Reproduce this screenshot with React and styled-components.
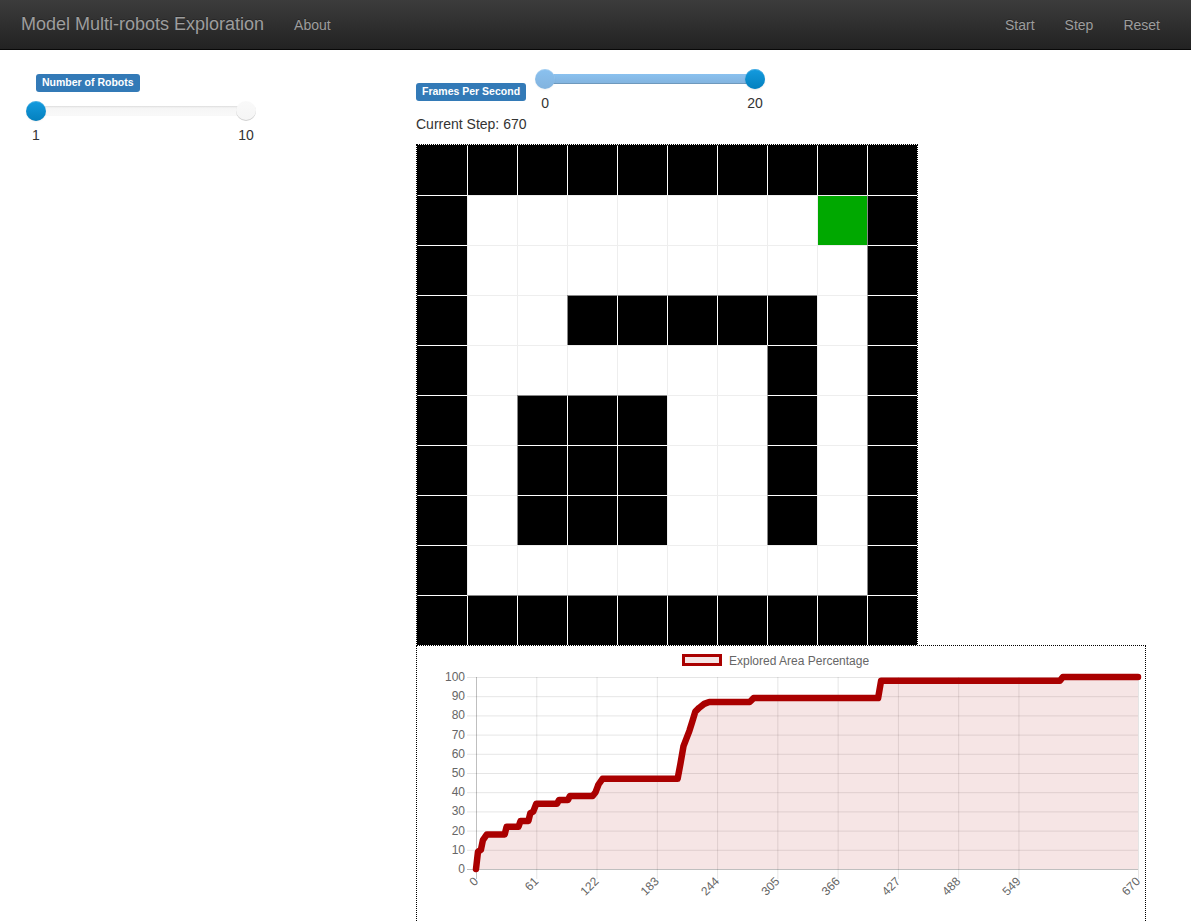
import React from 'react';
import styled, { createGlobalStyle } from 'styled-components';

const GlobalStyle = createGlobalStyle`
  body {
    margin: 0;
    font-family: "Liberation Sans", Arial, Helvetica, sans-serif;
    font-size: 14px;
    color: #333;
    background: #fff;
  }
`;

const Navbar = styled.nav`
  height: 50px;
  box-sizing: border-box;
  display: flex;
  align-items: center;
  background: linear-gradient(to bottom, #3c3c3c 0%, #222 100%);
  border-bottom: 1px solid #080808;
`;

const Brand = styled.a`
  padding: 0 15px 0 21px;
  font-size: 18px;
  color: #9d9d9d;
  text-shadow: 0 -1px 0 rgba(0, 0, 0, 0.25);
`;

const NavLink = styled.a`
  padding: 0 15px;
  font-size: 14px;
  color: #9d9d9d;
  text-shadow: 0 -1px 0 rgba(0, 0, 0, 0.25);
`;

const NavRight = styled.div`
  margin-left: auto;
  padding-right: 16px;
  display: flex;
`;

const Main = styled.div`
  display: flex;
`;

const LeftCol = styled.div`
  width: 416px;
  box-sizing: border-box;
  padding: 23px 0 0 36px;
`;

const RightCol = styled.div`
  padding-top: 19px;
`;

const Badge = styled.span`
  display: inline-block;
  padding: 3px 6px 4px;
  font-size: 10.5px;
  line-height: 11px;
  font-weight: bold;
  color: #fff;
  background: #337ab7;
  border-radius: 3px;
  white-space: nowrap;
`;

const SliderBlock = styled.div`
  width: ${p => p.$width}px;
  margin-top: ${p => p.$top || 0}px;
  margin-left: ${p => p.$left || 0}px;
`;

const SliderBar = styled.div`
  position: relative;
  height: 20px;
`;

const Track = styled.div`
  position: absolute;
  left: 0;
  right: 0;
  top: 5px;
  height: 10px;
  border-radius: 4px;
  background: linear-gradient(to bottom, #f5f5f5 0%, #f9f9f9 100%);
  box-shadow: inset 0 1px 2px rgba(0, 0, 0, 0.1);
`;

const Selection = styled.div`
  position: absolute;
  left: 0;
  top: 0;
  bottom: 0;
  border-radius: 4px;
  background: linear-gradient(to bottom, #8ac1ef 0%, #82b3de 100%);
  box-shadow: inset 0 -1px 0 rgba(0, 0, 0, 0.15);
`;

const Knob = styled.div`
  position: absolute;
  top: 0;
  width: 20px;
  height: 20px;
  margin-left: -10px;
  border-radius: 50%;
  box-shadow: inset 0 1px 0 rgba(255, 255, 255, 0.2), 0 1px 2px rgba(0, 0, 0, 0.05);
  background: ${p =>
    p.$kind === 'handle'
      ? 'linear-gradient(to bottom, #149bdf 0%, #0480be 100%)'
      : p.$kind === 'in'
      ? 'linear-gradient(to bottom, #8ac1ef 0%, #82b3de 100%)'
      : 'linear-gradient(to bottom, #f9f9f9 0%, #f5f5f5 100%)'};
  ${p => p.$kind === 'tick' && 'box-shadow: inset 0 -1px 0 rgba(0,0,0,0.15);'}
`;

const TickLabels = styled.div`
  position: relative;
  height: 20px;
  margin-top: 4px;
  line-height: 20px;
`;

const TickLabel = styled.span`
  position: absolute;
  top: 0;
  transform: translateX(-50%);
`;

const FpsRow = styled.div`
  display: flex;
  align-items: flex-start;
`;

const FpsBadge = styled(Badge)`
  margin-top: 14px;
`;

const StepText = styled.div`
  line-height: 20px;
  margin-top: 1px;
`;

const GridFrame = styled.div`
  margin-top: 10px;
  width: 500px;
  border: 1px dotted #000;
  display: grid;
  grid-template-columns: repeat(10, 50px);
  grid-auto-rows: 50px;
`;

const Cell = styled.div`
  box-sizing: border-box;
  background: ${p => p.$fill};
  border-left: 1px solid ${p => p.$left};
  border-top: 1px solid ${p => p.$top};
`;

const ChartBox = styled.div`
  margin-top: -1px;
  width: 728px;
  height: 364px;
  border: 1px dotted #000;
`;

function Slider({ width, min, max, value, selected, top, left }) {
  const pos = ((value - min) / (max - min)) * 100;
  return (
    <SliderBlock $width={width} $top={top} $left={left}>
      <SliderBar>
        <Track>{selected && <Selection style={{ width: pos + '%' }} />}</Track>
        <Knob $kind={selected ? 'in' : 'tick'} style={{ left: '0%' }} />
        <Knob $kind={selected && pos >= 100 ? 'in' : 'tick'} style={{ left: '100%' }} />
        <Knob $kind="handle" style={{ left: pos + '%' }} />
      </SliderBar>
      <TickLabels>
        <TickLabel style={{ left: '0%' }}>{min}</TickLabel>
        <TickLabel style={{ left: '100%' }}>{max}</TickLabel>
      </TickLabels>
    </SliderBlock>
  );
}

const MAP = [
  'BBBBBBBBBB',
  'BWWWWWWWGB',
  'BWWWWWWWWB',
  'BWWBBBBBWB',
  'BWWWWWWBWB',
  'BWBBBWWBWB',
  'BWBBBWWBWB',
  'BWBBBWWBWB',
  'BWWWWWWWWB',
  'BBBBBBBBBB',
];

const FILL = { B: '#000', W: '#fff', G: '#00a800' };

function lineColor(self, neighbor) {
  if (neighbor === null) return FILL[self];
  if (self === 'B') return neighbor === 'B' ? '#fff' : '#888';
  return '#eee';
}

function MapGrid() {
  const cells = [];
  MAP.forEach((row, r) => {
    row.split('').forEach((c, col) => {
      const leftN = col === 0 ? null : row[col - 1];
      const topN = r === 0 ? null : MAP[r - 1][col];
      cells.push(
        <Cell
          key={r + '-' + col}
          $fill={FILL[c]}
          $left={lineColor(c, leftN)}
          $top={lineColor(c, topN)}
        />
      );
    });
  });
  return <GridFrame>{cells}</GridFrame>;
}

const DATA = [
  [0, 0], [2, 9], [5, 10], [7, 15], [11, 18], [29, 18], [31, 22], [43, 22],
  [45, 25], [53, 25], [55, 29], [58, 30], [61, 34], [82, 34], [84, 36], [93, 36],
  [95, 38], [118, 38], [121, 40], [124, 44], [128, 47], [204, 47], [207, 55],
  [210, 64], [213, 68], [216, 72], [219, 77], [222, 82], [226, 84], [231, 86],
  [236, 87], [277, 87], [281, 89], [407, 89], [410, 98], [591, 98], [594, 100],
  [670, 100],
];

const X0 = 59;
const XS = 662 / 670;
const Y0 = 223;
const YS = 1.92;
const sx = s => X0 + s * XS;
const sy = v => Y0 - v * YS;
const X_TICKS = [0, 61, 122, 183, 244, 305, 366, 427, 488, 549, 670];
const Y_TICKS = [0, 10, 20, 30, 40, 50, 60, 70, 80, 90, 100];

function AreaChart() {
  const line = DATA.map(([s, v]) => `${sx(s).toFixed(1)},${sy(v).toFixed(1)}`).join(' ');
  const area = `${sx(0)},${Y0} ${line} ${sx(670)},${Y0}`;
  const font = '"Liberation Sans", Arial, sans-serif';
  return (
    <svg width="728" height="364" fontFamily={font}>
      <rect x="266.5" y="9.5" width="37" height="9" fill="rgba(170,0,0,0.1)" stroke="#aa0000" strokeWidth="3" />
      <text x="312" y="18.5" fontSize="12" fill="#666">Explored Area Percentage</text>
      {Y_TICKS.map(v => (
        <g key={'y' + v}>
          <line
            x1="50" x2={sx(670)} y1={sy(v) + 0.5} y2={sy(v) + 0.5}
            stroke={v === 0 ? 'rgba(0,0,0,0.25)' : 'rgba(0,0,0,0.1)'}
          />
          <text x="48" y={sy(v) + 4} fontSize="12" fill="#666" textAnchor="end">{v}</text>
        </g>
      ))}
      {X_TICKS.map(s => (
        <g key={'x' + s}>
          <line
            x1={sx(s) + 0.5} x2={sx(s) + 0.5} y1={sy(100)} y2={Y0 + 10}
            stroke={s === 0 ? 'rgba(0,0,0,0.25)' : 'rgba(0,0,0,0.1)'}
          />
          <text
            fontSize="12" fill="#666" textAnchor="end" dy="0.35em"
            transform={`translate(${sx(s)},${Y0 + 10}) rotate(-45)`}
          >
            {s}
          </text>
        </g>
      ))}
      <polygon points={area} fill="rgba(170,0,0,0.1)" />
      <polyline
        points={line} fill="none" stroke="#aa0000" strokeWidth="6.5"
        strokeLinejoin="round" strokeLinecap="round"
      />
    </svg>
  );
}

export default function App() {
  return (
    <>
      <GlobalStyle />
      <Navbar>
        <Brand>Model Multi-robots Exploration</Brand>
        <NavLink>About</NavLink>
        <NavRight>
          <NavLink>Start</NavLink>
          <NavLink>Step</NavLink>
          <NavLink>Reset</NavLink>
        </NavRight>
      </Navbar>
      <Main>
        <LeftCol>
          <Badge>Number of Robots</Badge>
          <Slider width={210} min={1} max={10} value={1} top={9} />
        </LeftCol>
        <RightCol>
          <FpsRow>
            <FpsBadge>Frames Per Second</FpsBadge>
            <Slider width={210} min={0} max={20} value={20} selected left={19} />
          </FpsRow>
          <StepText>Current Step: 670</StepText>
          <MapGrid />
          <ChartBox>
            <AreaChart />
          </ChartBox>
        </RightCol>
      </Main>
    </>
  );
}
